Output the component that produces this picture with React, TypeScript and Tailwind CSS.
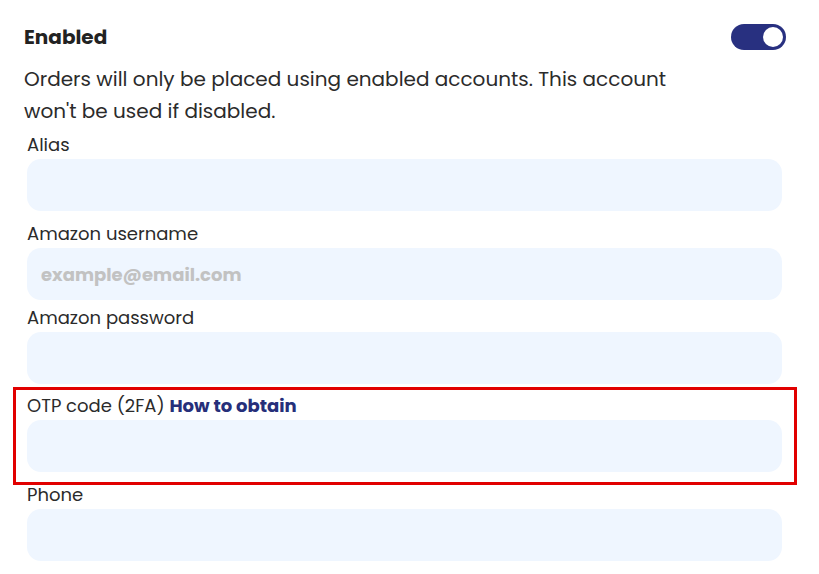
import React from "react";

function Field(props: { label: React.ReactNode; placeholder?: string; className?: string; children?: React.ReactNode }) {
  return (
    <div className={"relative " + (props.className || "")}>
      <div className="h-6 text-[18px] leading-[28px] text-[#2b2b2b]">{props.label}</div>
      <input
        placeholder={props.placeholder}
        className="mt-[4px] w-full h-[52px] rounded-[14px] bg-[#eff6ff] px-[14px] text-[18px] font-bold outline-none placeholder:text-[#c2c2c2]"
      />
      {props.children}
    </div>
  );
}

export default function App() {
  return (
    <div
      className="w-[819px] h-[574px] overflow-hidden bg-white pl-6 pr-[33px] pt-6"
      style={{ fontFamily: "Poppins, Inter, 'Noto Sans', sans-serif" }}
    >
      <div className="flex items-center justify-between h-[26px]">
        <span className="text-[20px] font-bold text-[#222]">Enabled</span>
        <div className="w-[55px] h-[26px] rounded-full bg-[#283080] p-[3px] flex justify-end">
          <div className="w-5 h-5 rounded-full bg-white" />
        </div>
      </div>
      <p className="mt-[13px] text-[20px] leading-8 text-[#2b2b2b] max-w-[680px]">
        Orders will only be placed using enabled accounts. This account won't be used if disabled.
      </p>
      <div className="pl-[3px] pr-[4px] mt-[4px] flex flex-col">
        <Field label="Alias" />
        <Field label="Amazon username" placeholder="example@email.com" className="mt-[9px]" />
        <Field label="Amazon password" className="mt-[4px]" />
        <Field
          className="mt-[8px]"
          label={
            <>
              OTP code (2FA) <span className="font-bold text-[#262f7a]">How to obtain</span>
            </>
          }
        >
          <div className="absolute -top-[5px] -left-[14px] -right-[15px] -bottom-[13px] border-[3px] border-[#e10000] pointer-events-none" />
        </Field>
        <Field label="Phone" className="mt-[9px]" />
      </div>
    </div>
  );
}
